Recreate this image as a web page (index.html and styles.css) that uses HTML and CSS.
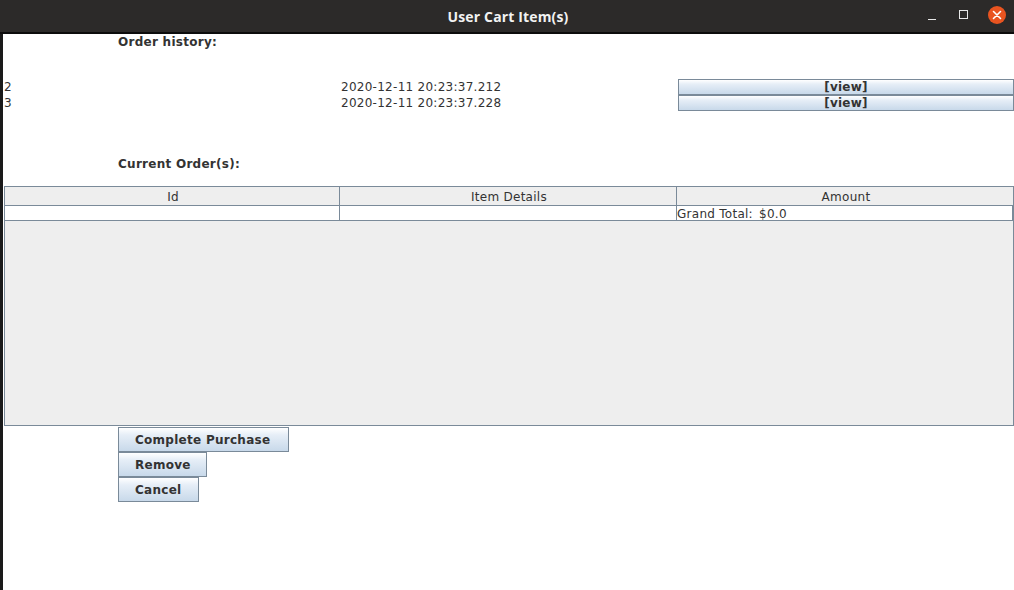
FILE: index.html
```html
<!DOCTYPE html>
<html>
<head>
<meta charset="utf-8">
<title>User Cart Item(s)</title>
<link rel="stylesheet" href="styles.css">
</head>
<body>
<div class="titlebar">
  <div class="title">User Cart Item(s)</div>
  <div class="controls">
    <span class="ctl-min"></span>
    <span class="ctl-max"></span>
    <span class="ctl-close">
      <svg width="18" height="18" viewBox="0 0 18 18"><path d="M5.5 5.5 L12.5 12.5 M12.5 5.5 L5.5 12.5" stroke="#fff" stroke-width="1.6" stroke-linecap="round"/></svg>
    </span>
  </div>
</div>
<div class="window">
  <div class="strip"></div>
  <div class="content">
    <div class="label label-history">Order history:</div>
    <div class="history">
      <div class="hrow">
        <div class="hcell">2</div>
        <div class="hcell">2020-12-11 20:23:37.212</div>
        <div class="hcell"><button class="btn btn-view">[view]</button></div>
      </div>
      <div class="hrow">
        <div class="hcell">3</div>
        <div class="hcell">2020-12-11 20:23:37.228</div>
        <div class="hcell"><button class="btn btn-view">[view]</button></div>
      </div>
    </div>
    <div class="label label-current">Current Order(s):</div>
    <div class="table">
      <div class="thead">
        <div class="th">Id</div>
        <div class="th">Item Details</div>
        <div class="th th-last">Amount</div>
      </div>
      <div class="trow">
        <div class="td"></div>
        <div class="td"></div>
        <div class="td td-last">Grand Total: <span class="amount">$0.0</span></div>
      </div>
      <div class="viewport"></div>
    </div>
    <div class="actions">
      <button class="btn btn-action btn-complete">Complete Purchase</button>
      <button class="btn btn-action btn-remove">Remove</button>
      <button class="btn btn-action btn-cancel">Cancel</button>
    </div>
  </div>
</div>
</body>
</html>
```
FILE: styles.css
```css
html, body {
  margin: 0;
  padding: 0;
}
body {
  width: 1014px;
  height: 590px;
  overflow: hidden;
  background: #ffffff;
  font-family: "DejaVu Sans", sans-serif;
  color: #333333;
}
.titlebar {
  position: relative;
  height: 32px;
  background: #2c2a29;
  border-bottom: 2px solid #0c0c0c;
  display: flex;
  align-items: center;
  justify-content: center;
}
.title {
  font-family: "Open Sans", "DejaVu Sans", sans-serif;
  font-weight: 700;
  font-size: 14px;
  color: #f2f2f2;
  letter-spacing: 0.15px;
  padding-left: 2px;
}
.controls {
  position: absolute;
  right: 0;
  top: 0;
  height: 32px;
  display: flex;
  align-items: center;
}
.ctl-min {
  width: 8px;
  height: 0;
  border-top: 1px solid #e8e8e8;
  margin-top: 6px;
  margin-right: 23px;
}
.ctl-max {
  width: 7px;
  height: 7px;
  border: 1px solid #e8e8e8;
  margin-top: -3px;
  margin-right: 20px;
}
.ctl-close {
  width: 18px;
  height: 18px;
  border-radius: 50%;
  background: #e95420;
  margin-top: -3px;
  margin-right: 8px;
  display: flex;
}
.window {
  display: flex;
  height: 556px;
}
.strip {
  width: 3px;
  background: #1a1a1a;
}
.content {
  flex: 1;
  padding-left: 1px;
  display: flex;
  flex-direction: column;
  letter-spacing: 0.27px;
}
.label {
  font-size: 12px;
  font-weight: 700;
  line-height: 15px;
  height: 15px;
  padding-left: 114px;
}
.label-history {
  padding-top: 1px;
}
.history {
  margin-top: 29px;
  display: flex;
  flex-direction: column;
}
.hrow {
  display: grid;
  grid-template-columns: 337px 337px 336px;
  height: 16px;
}
.hcell {
  font-size: 12px;
  line-height: 16px;
  white-space: nowrap;
}
.btn {
  font-family: "DejaVu Sans", sans-serif;
  font-weight: 700;
  font-size: 12px;
  letter-spacing: 0.27px;
  color: #333333;
  border: 1px solid #7a8a99;
  background: linear-gradient(to bottom, #ffffff 0%, #e6eef7 30%, #c8d9ea 100%);
  padding: 0;
  margin: 0;
  box-sizing: border-box;
}
.btn-view {
  width: 336px;
  height: 16px;
  line-height: 14px;
  display: block;
}
.label-current {
  margin-top: 45px;
  padding-top: 1px;
}
.table {
  margin-top: 14px;
  width: 1010px;
  height: 240px;
  box-sizing: border-box;
  border: 1px solid #7a8a99;
  display: flex;
  flex-direction: column;
}
.thead, .trow {
  display: grid;
  grid-template-columns: 335px 337px 1fr;
}
.thead {
  height: 19px;
  background: #eeeeee;
  border-bottom: 1px solid #7a8a99;
  box-sizing: border-box;
}
.th {
  font-size: 12px;
  line-height: 18px;
  padding-top: 1px;
  padding-left: 2px;
  text-align: center;
  border-right: 1px solid #7a8a99;
}
.th-last, .td-last {
  border-right: none;
}
.trow {
  height: 15px;
  border-bottom: 1px solid #7a8a99;
  box-sizing: border-box;
}
.td {
  font-size: 12px;
  line-height: 14px;
  padding-top: 1px;
  border-right: 1px solid #7a8a99;
  white-space: nowrap;
}
.amount {
  margin-left: 2px;
}
.viewport {
  flex: 1;
  background: #eeeeee;
}
.actions {
  margin-top: 1px;
  padding-left: 114px;
  display: flex;
  flex-direction: column;
  align-items: flex-start;
}
.btn-action {
  height: 25px;
  text-align: left;
  padding-left: 16px;
}
.btn-complete { width: 171px; }
.btn-remove { width: 89px; }
.btn-cancel { width: 81px; }
```
